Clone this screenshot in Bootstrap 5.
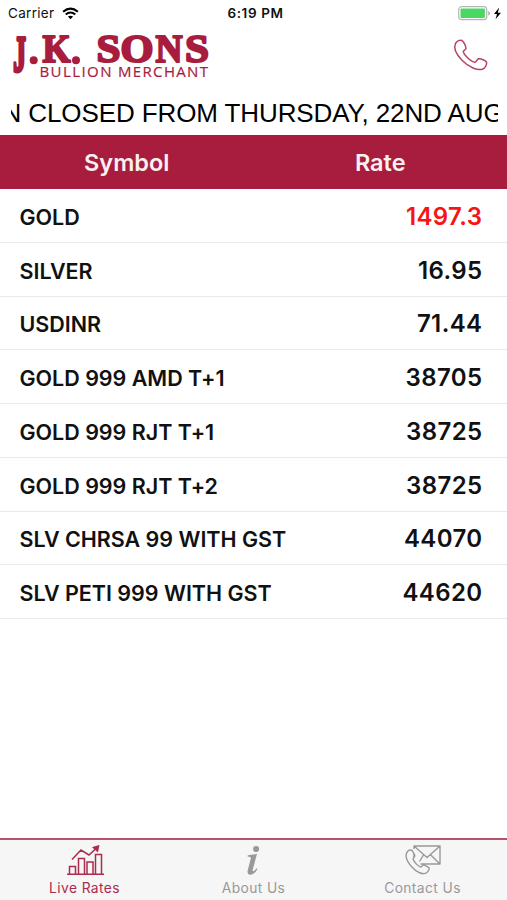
<!DOCTYPE html>
<html lang="en">
<head>
<meta charset="utf-8">
<meta name="viewport" content="width=device-width, initial-scale=1">
<title>J.K. Sons Live Rates</title>
<link rel="stylesheet" href="https://cdn.jsdelivr.net/npm/bootstrap@5.3.0/dist/css/bootstrap.min.css">
<style>
body{font-family:Inter,"Liberation Sans",sans-serif;color:#111;background:#fff;height:900px;overflow:hidden}
svg{display:block;flex:none}
.status{height:27px;padding:0 5px 0 8px;font-size:13.5px;line-height:27px}
.status>div{flex:1 1 0}
.status .carrier{letter-spacing:.3px}
.clock{font-weight:600;font-size:13.5px;letter-spacing:.6px;padding-left:1px}
.brand-bar{height:62px;padding:4px 20px 0 8px}
.ticker{height:46px;margin:0 9px 0 11px;padding-top:4px;line-height:40px;font-family:"Liberation Sans",Arial,sans-serif;font-size:26px;color:#000}
.ticker span{display:block;margin-left:-8.500px;letter-spacing:-.1px}
.heads{height:54px;background:#a81d3e;color:#fbeff2;font-weight:600;font-size:23.5px;line-height:55px;text-align:center}
.rate-row{height:53.75px;border-bottom:1px solid #e9e9e9;padding:1px 25px 0 19.5px}
.sym{font-size:21.500px;font-weight:600;letter-spacing:-.02px;padding-top:2px}
.val{font-size:24px;font-weight:600;letter-spacing:.4px;margin-right:-.5px;padding-top:2px}
.up{color:#f71414}
.tabs{height:62px;border-top:2px solid #b9506b;background:#f6f6f6;font-size:13.800px;letter-spacing:.4px;color:#999;line-height:16px}
.tabs>div{flex:1 1 0;padding-top:5px}
.tabs svg{margin-bottom:5px}
.tabs .on{color:#ab2c4d}
</style>
<script defer src="https://cdn.jsdelivr.net/npm/bootstrap@5.3.0/dist/js/bootstrap.bundle.min.js"></script>
</head>
<body class="d-flex flex-column">
<header>
  <div class="status d-flex align-items-center">
    <div class="d-flex align-items-center"><span class="carrier">Carrier</span>
      <svg class="ms-2" width="17" height="13" viewBox="0 0 17 13"><path d="M8.5 12.3 5.9 9.6Q8.500 7.700 11.100 9.600Z"/><path d="M3.700 7.500Q8.500 3.500 13.300 7.500M1.100 4.700Q8.500-1.500 15.900 4.700" fill="none" stroke="#000" stroke-width="2.100"/></svg>
    </div>
    <div class="clock text-center">6:19 PM</div>
    <div class="d-flex align-items-center justify-content-end">
      <svg width="44" height="15" viewBox="0 0 44 15"><rect x=".7" y=".7" width="28" height="13" rx="3" fill="#fff" stroke="#b5b5b5" stroke-width="1.200"/><rect x="2.500" y="2.500" width="24.400" height="9.400" rx="1" fill="#4bd763"/><path d="M30.400 5v4.500q1.400-.6 1.400-2.250T30.400 5Z" fill="#999"/><path d="M41.200 1.500 36 8h3l-1.500 5.300L43 6.700h-3.200Z"/></svg>
    </div>
  </div>
  <div class="brand-bar d-flex justify-content-between">
    <svg width="204" height="52" viewBox="8 31 204 52" fill="#a81d3e" role="img" aria-label="J.K. Sons Bullion Merchant">
      <g font-family="Liberation Serif,serif" font-weight="700" font-size="41" stroke="#a81d3e" stroke-width="2.200" stroke-linejoin="round">
        <text transform="translate(13.200 71) scale(.62 1.250)" x="0" y="0" stroke-width="3.200">J</text>
        <text x="42.500" y="61.900" textLength="28" lengthAdjust="spacingAndGlyphs">K</text>
        <text x="96.500" y="61.900" textLength="24" lengthAdjust="spacingAndGlyphs">S</text>
        <text x="120.500" y="61.900" textLength="33" lengthAdjust="spacingAndGlyphs">O</text>
        <text x="155.500" y="61.900" textLength="27" lengthAdjust="spacingAndGlyphs">N</text>
        <text x="185" y="61.900" textLength="24" lengthAdjust="spacingAndGlyphs">S</text>
      </g>
      <circle cx="33.700" cy="60.300" r="4"/><circle cx="76" cy="60.300" r="4"/>
      <g font-family="Open Sans,sans-serif" font-size="15" stroke="#a81d3e" stroke-width=".2">
        <text x="39.500" y="77.300" textLength="72">BULLION</text><text x="118" y="77.300" textLength="90">MERCHANT</text>
      </g>
    </svg>
    <svg class="mt-1" width="40" height="40" viewBox="447 35 40 40" fill="none" stroke="#b74561" stroke-width="1.500" stroke-linejoin="round" overflow="visible"><path d="M455.500 43.500C457 41 460 39.500 462 40.500C463.800 42 466 46 466 48.500C465.800 50 463.500 50.300 463.300 51.700C464 55.500 471.500 61.800 474.800 62.200C476.500 62 476.700 59.500 478.500 58.800C481 58.400 485.500 60.500 486.500 62C487.300 64.500 484.800 68.500 482.300 69.200C477.500 70.700 469 67.500 462 60.300C455.500 53.500 453.300 48 455.500 43.500Z"/></svg>
  </div>
  <div class="ticker overflow-hidden text-nowrap"><span>N CLOSED FROM THURSDAY, 22ND AUGUST</span></div>
</header>
<main class="flex-grow-1">
  <div class="heads row g-0"><div class="col-6">Symbol</div><div class="col-6">Rate</div></div>
  <div class="rate-row d-flex align-items-center justify-content-between"><span class="sym">GOLD</span><span class="val up">1497.3</span></div>
  <div class="rate-row d-flex align-items-center justify-content-between"><span class="sym">SILVER</span><span class="val">16.95</span></div>
  <div class="rate-row d-flex align-items-center justify-content-between"><span class="sym">USDINR</span><span class="val">71.44</span></div>
  <div class="rate-row d-flex align-items-center justify-content-between"><span class="sym">GOLD 999 AMD T+1</span><span class="val">38705</span></div>
  <div class="rate-row d-flex align-items-center justify-content-between"><span class="sym">GOLD 999 RJT T+1</span><span class="val">38725</span></div>
  <div class="rate-row d-flex align-items-center justify-content-between"><span class="sym">GOLD 999 RJT T+2</span><span class="val">38725</span></div>
  <div class="rate-row d-flex align-items-center justify-content-between"><span class="sym">SLV CHRSA 99 WITH GST</span><span class="val">44070</span></div>
  <div class="rate-row d-flex align-items-center justify-content-between"><span class="sym">SLV PETI 999 WITH GST</span><span class="val">44620</span></div>
</main>
<nav class="tabs d-flex text-center">
  <div class="on d-flex flex-column align-items-center">
    <svg width="38" height="30" viewBox="66 845 38 30" fill="none" stroke="currentColor" stroke-width="1.500"><path d="M67 874.200H104M69.500 874V866.500H75.500V874M78.500 874V858.500H84.500V874M87 874V862H93V874M95.500 874V854.500H101.500V874M72 859.500 81 850 89 855 96 848.500"/><path d="M93.500 847.500 98.500 846 97.500 851Z" fill="currentColor"/></svg>
    <span>Live Rates</span></div>
  <div class="d-flex flex-column align-items-center">
    <svg width="20" height="30" viewBox="244.500 845 20 30" fill="currentColor"><circle cx="256.600" cy="849" r="3"/><path d="M248.300 855.300Q253 855.200 257.500 853.800L253.300 869.500Q252.800 871.500 254 871.200Q255.300 870.800 257 868.200L258 869Q254.800 874.800 250.500 874.800Q247.300 874.600 248.200 870.500L251.300 858.500Q251.600 856.500 248 856.600Z"/></svg>
    <span>About Us</span></div>
  <div class="d-flex flex-column align-items-center">
    <svg width="36" height="30" viewBox="404.500 845 36 30" fill="none" stroke="currentColor" stroke-width="1.400" stroke-linejoin="round"><path d="M413.500 849V846H439.500V864H420M413.500 853.500V857M413.800 846.300 426.500 857.500 439.200 846.300M439.200 863.700 430 854.700M419 861.500 423 855"/><path d="M407 851.500C408.500 849.500 411 849.500 412 851L414.300 855.500C414.600 857 412.500 857.700 412.600 859C413.500 862 417.500 866.300 420.300 867C421.700 867 422 864.800 423.500 864.800L428 867.300C429.300 868.500 428.300 871 426.500 872.500C422.500 875.300 416 872.500 410.500 866C405.500 860 404 855.500 407 851.500Z"/></svg>
    <span>Contact Us</span></div>
</nav>
</body>
</html>
